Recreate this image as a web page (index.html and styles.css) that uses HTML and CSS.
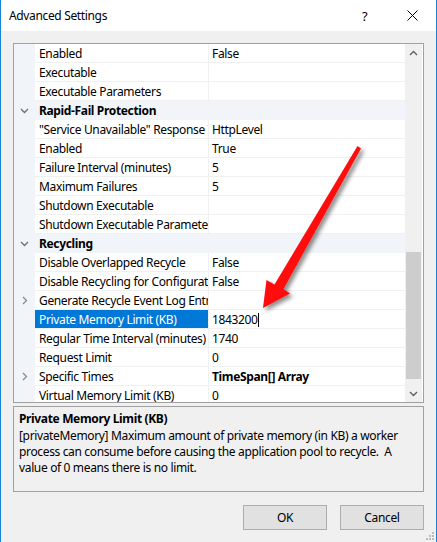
FILE: index.html
```html
<!DOCTYPE html>
<html>
<head>
<meta charset="utf-8">
<link rel="stylesheet" href="styles.css">
</head>
<body>
<div class="window">
  <div class="titlebar">
    <span class="title">Advanced Settings</span>
    <span class="help">?</span>
    <span class="close"><svg width="11" height="11" viewBox="0 0 11 11"><path d="M0.5 0.5L10.5 10.5M10.5 0.5L0.5 10.5" stroke="#000" stroke-width="1" fill="none"/></svg></span>
  </div>
  <div class="content">
    <div class="grid">
      <div class="rows">
        <div class="row"><span class="gut"></span><span class="name">Enabled</span><span class="val">False</span></div>
        <div class="row"><span class="gut"></span><span class="name">Executable</span><span class="val"></span></div>
        <div class="row"><span class="gut"></span><span class="name">Executable Parameters</span><span class="val"></span></div>
        <div class="row cat"><span class="gut"><svg width="9" height="6" viewBox="0 0 9 6"><path d="M1 1L4.5 4.5L8 1" stroke="#6d6d6d" stroke-width="1.3" fill="none"/></svg></span><span class="name">Rapid-Fail Protection</span><span class="val"></span></div>
        <div class="row"><span class="gut"></span><span class="name">"Service Unavailable" Response Type</span><span class="val">HttpLevel</span></div>
        <div class="row"><span class="gut"></span><span class="name">Enabled</span><span class="val">True</span></div>
        <div class="row"><span class="gut"></span><span class="name">Failure Interval (minutes)</span><span class="val">5</span></div>
        <div class="row"><span class="gut"></span><span class="name">Maximum Failures</span><span class="val">5</span></div>
        <div class="row"><span class="gut"></span><span class="name">Shutdown Executable</span><span class="val"></span></div>
        <div class="row"><span class="gut"></span><span class="name">Shutdown Executable Parameters</span><span class="val"></span></div>
        <div class="row cat"><span class="gut"><svg width="9" height="6" viewBox="0 0 9 6"><path d="M1 1L4.5 4.5L8 1" stroke="#6d6d6d" stroke-width="1.3" fill="none"/></svg></span><span class="name">Recycling</span><span class="val"></span></div>
        <div class="row"><span class="gut"></span><span class="name">Disable Overlapped Recycle</span><span class="val">False</span></div>
        <div class="row"><span class="gut"></span><span class="name">Disable Recycling for Configuration Changes</span><span class="val">False</span></div>
        <div class="row"><span class="gut"><svg width="6" height="9" viewBox="0 0 6 9"><path d="M1 1L4.5 4.5L1 8" stroke="#8a8a8a" stroke-width="1.3" fill="none"/></svg></span><span class="name">Generate Recycle Event Log Entry</span><span class="val"></span></div>
        <div class="row sel"><span class="gut"></span><span class="name">Private Memory Limit (KB)</span><span class="val">1843200<span class="caret"></span></span></div>
        <div class="row"><span class="gut"></span><span class="name">Regular Time Interval (minutes)</span><span class="val">1740</span></div>
        <div class="row"><span class="gut"></span><span class="name">Request Limit</span><span class="val">0</span></div>
        <div class="row"><span class="gut"><svg width="6" height="9" viewBox="0 0 6 9"><path d="M1 1L4.5 4.5L1 8" stroke="#8a8a8a" stroke-width="1.3" fill="none"/></svg></span><span class="name">Specific Times</span><span class="val bold">TimeSpan[] Array</span></div>
        <div class="row"><span class="gut"></span><span class="name">Virtual Memory Limit (KB)</span><span class="val">0</span></div>
      </div>
      <div class="scrollbar">
        <div class="sb-btn"><svg width="9" height="6" viewBox="0 0 9 6"><path d="M1 5L4.5 1.5L8 5" stroke="#606060" stroke-width="1.4" fill="none"/></svg></div>
        <div class="sb-track"><div class="thumb"></div></div>
        <div class="sb-btn"><svg width="9" height="6" viewBox="0 0 9 6"><path d="M1 1L4.5 4.5L8 1" stroke="#606060" stroke-width="1.4" fill="none"/></svg></div>
      </div>
    </div>
    <div class="desc">
      <div class="desc-title">Private Memory Limit (KB)</div>
      <div class="desc-text">[privateMemory] Maximum amount of private memory (in KB) a worker process can consume before causing the application pool to recycle.&nbsp; A value of 0 means there is no limit.</div>
    </div>
    <div class="buttons">
      <button class="btn">OK</button>
      <button class="btn">Cancel</button>
    </div>
  </div>
  <svg class="grip" width="8" height="8" viewBox="0 0 8 8"><g fill="#bcbcbc"><rect x="6" y="0" width="2" height="2"/><rect x="3" y="3" width="2" height="2"/><rect x="6" y="3" width="2" height="2"/><rect x="0" y="6" width="2" height="2"/><rect x="3" y="6" width="2" height="2"/><rect x="6" y="6" width="2" height="2"/></g></svg>
  <svg class="arrow" width="437" height="542" viewBox="0 0 437 542">
    <defs>
      <filter id="sh" x="-20%" y="-20%" width="140%" height="140%">
        <feGaussianBlur in="SourceAlpha" stdDeviation="2.2"/>
        <feOffset dx="3" dy="3" result="b"/>
        <feComponentTransfer><feFuncA type="linear" slope="0.45"/></feComponentTransfer>
        <feMerge><feMergeNode/><feMergeNode in="SourceGraphic"/></feMerge>
      </filter>
    </defs>
    <polygon points="357.5,146 361,148.5 283.5,289 290,293.5 263,308 266.5,280 274.5,284.5" fill="#ff0a0a" filter="url(#sh)"/>
  </svg>
</div>
</body>
</html>
```

FILE: styles.css
```css
html, body {
  margin: 0;
  padding: 0;
  background: #ffffff;
}
body {
  font-family: "Noto Sans", "Open Sans", sans-serif;
  font-size: 12px;
  letter-spacing: -0.35px;
  color: #000;
}
.window {
  position: relative;
  width: 435px;
  height: 542px;
  border-left: 1px solid #1883d7;
  border-right: 1px solid #1883d7;
  background: #f0f0f0;
  overflow: hidden;
}
.titlebar {
  height: 31px;
  background: #ffffff;
  display: flex;
  align-items: center;
}
.title {
  margin-left: 8px;
  font-size: 12px;
  flex: 1;
}
.help {
  width: 12px;
  margin-right: 33px;
  font-size: 13px;
}
.close {
  display: flex;
  margin-right: 18px;
}
.content {
  padding: 12px 12px 0 12px;
}
.grid {
  display: flex;
  height: 358px;
  border: 1px solid #a0a0a0;
  background: #ffffff;
}
.rows {
  width: 391px;
  overflow: hidden;
}
.row {
  display: grid;
  grid-template-columns: 21px 174px 196px;
  height: 19px;
}
.gut {
  background: #f1f4f9;
  display: flex;
  align-items: center;
  justify-content: center;
}
.name {
  padding: 1px 0 0 4px;
  white-space: nowrap;
  overflow: hidden;
  line-height: 17px;
  border-right: 1px solid #f0f0f0;
  border-bottom: 1px solid #f0f0f0;
}
.val {
  padding: 1px 0 0 3px;
  white-space: nowrap;
  overflow: hidden;
  line-height: 17px;
  border-bottom: 1px solid #f0f0f0;
}
.bold {
  font-weight: bold;
}
.cat .name, .cat .val {
  background: #f1f4f9;
  border-color: #f1f4f9;
  font-weight: bold;
}
.sel .name {
  background: #0078d7;
  color: #ffffff;
}
.caret {
  display: inline-block;
  width: 1px;
  height: 14px;
  background: #000;
  vertical-align: -3px;
}
.scrollbar {
  width: 17px;
  background: #f0f0f0;
  display: flex;
  flex-direction: column;
}
.sb-btn {
  height: 17px;
  display: flex;
  align-items: center;
  justify-content: center;
}
.sb-track {
  flex: 1;
}
.thumb {
  margin: 191px 1px 0 1px;
  height: 127px;
  background: #cdcdcd;
}
.desc {
  margin-top: 3px;
  height: 81px;
  border: 1px solid #a0a0a0;
  padding: 3px 5px 0 5px;
}
.desc-title {
  font-weight: bold;
  line-height: 17px;
}
.desc-text {
  margin-top: 1px;
  line-height: 16px;
}
.buttons {
  display: flex;
  justify-content: flex-end;
  gap: 13px;
  margin-top: 13px;
}
.btn {
  width: 84px;
  height: 25px;
  margin: 0;
  padding: 0;
  background: #e1e1e1;
  border: 1px solid #adadad;
  font-family: "Noto Sans", "Open Sans", sans-serif;
  font-size: 12px;
  letter-spacing: -0.35px;
  color: #000;
}
.grip {
  position: absolute;
  right: 2px;
  bottom: 2px;
}
.arrow {
  position: absolute;
  left: -1px;
  top: 0;
  pointer-events: none;
}
```
